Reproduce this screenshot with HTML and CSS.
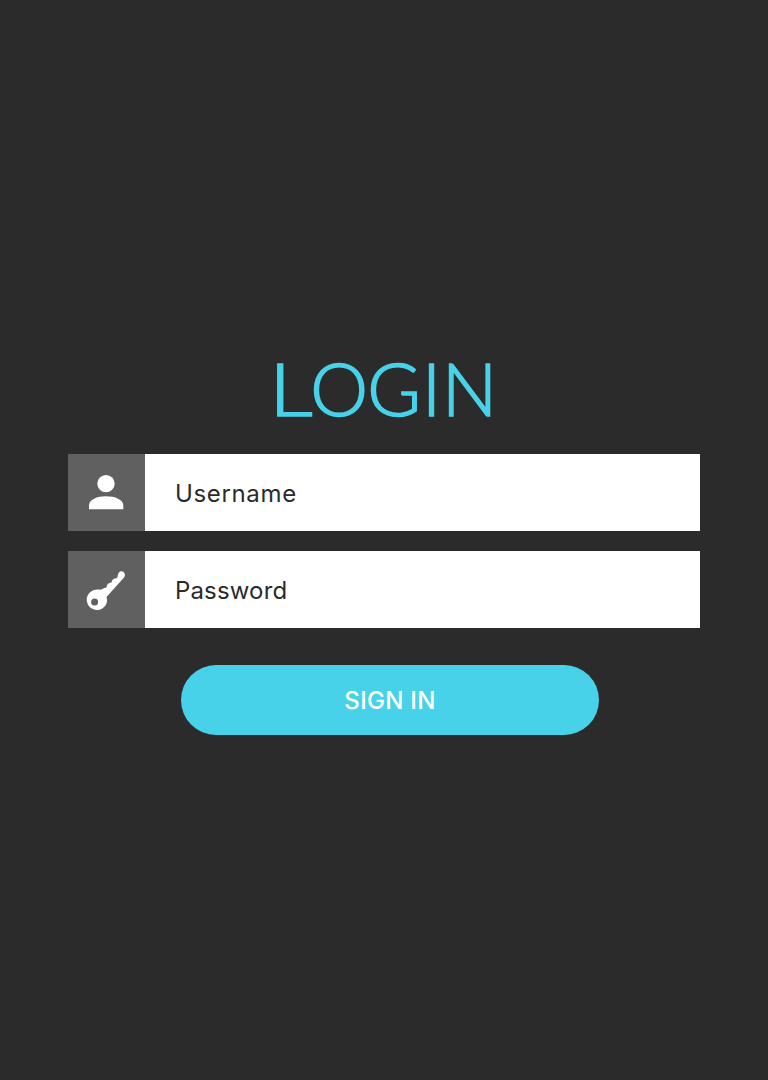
FILE: index.html
```html
<!DOCTYPE html>
<html lang="en">
<head>
<meta charset="utf-8">
<title>Login</title>
<link rel="stylesheet" href="styles.css">
</head>
<body>
<main class="login">
  <h1 class="title"><span class="wide-l">L</span><span class="kern-o">O</span>GIN</h1>
  <form class="form">
    <label class="field">
      <span class="icon">
        <svg width="77" height="77" viewBox="0 0 77 77"><circle cx="38" cy="29.600" r="8.700"/><path d="M21 55.200V51.500C21 45.500 29 42.200 38 42.200S55.300 45.500 55.300 51.500V55.200Z"/></svg>
      </span>
      <input class="input" type="text" placeholder="Username">
    </label>
    <label class="field">
      <span class="icon">
        <svg width="77" height="77" viewBox="0 0 77 77"><path fill-rule="evenodd" d="M50.500 22.300C52 19.500 55.500 19.900 56.600 22.500C57.300 24.300 56.900 25.500 55.800 26.800L38.500 46C40.800 52.500 35.700 59 29 59C23.400 59 18.700 54.500 18.700 48.600C18.700 42 25.300 36.900 32.700 38.800L35 37.800C36 37.300 36.800 36.800 38.500 36.600C38.500 33.500 40.300 31.900 43.500 31.600C43.800 28.800 45.300 27.400 48.600 27.300C49.800 27 49.300 24.400 50.500 22.300ZM26.600 47.600A3.500 3.500 0 1 0 26.600 54.600A3.500 3.500 0 1 0 26.600 47.600Z"/></svg>
      </span>
      <input class="input input-password" type="password" placeholder="Password">
    </label>
    <button class="submit" type="button">SIGN IN</button>
  </form>
</main>
</body>
</html>
```
FILE: styles.css
```css
* { box-sizing: border-box; }
body {
  margin: 0;
  background: #2b2b2b;
  font-family: Inter, "Open Sans", sans-serif;
}
.login {
  width: 632px;
  margin: 0 auto;
  padding-top: 344px;
}
.title {
  margin: 0 0 22px;
  height: 88px;
  font: 300 73px/88px Lato, sans-serif;
  letter-spacing: 1.1px;
  text-align: center;
  color: #48d2ea;
  -webkit-text-stroke: 1.6px #48d2ea;
}
.wide-l {
  display: inline-block;
  margin-right: 6px;
  letter-spacing: -2.5px;
  transform: scaleX(1.18);
  transform-origin: 6px 50%;
}
.kern-o {
  letter-spacing: -0.8px;
}
.form {
  display: flex;
  flex-direction: column;
  gap: 20px;
}
.field {
  display: flex;
  height: 77px;
  background: #fff;
}
.icon {
  width: 77px;
  height: 77px;
  background: #606060;
}
.icon svg {
  display: block;
  fill: #fff;
}
.input {
  flex: 1;
  min-width: 0;
  border: 0;
  padding: 2px 30px 0;
  background: transparent;
  font: 400 24px/30px Inter, sans-serif;
  letter-spacing: 0.65px;
  color: #2b2b2b;
  outline: 0;
}
.input-password {
  letter-spacing: 0.15px;
}
.input::placeholder {
  color: #2b2b2b;
  opacity: 1;
}
.submit {
  width: 418px;
  height: 70px;
  margin: 17px 0 0 113px;
  padding: 2px 0 0;
  border: 0;
  border-radius: 35px;
  background: #48d2ea;
  color: #fff;
  font: 500 24px/30px Inter, sans-serif;
  letter-spacing: 0.3px;
}
```
